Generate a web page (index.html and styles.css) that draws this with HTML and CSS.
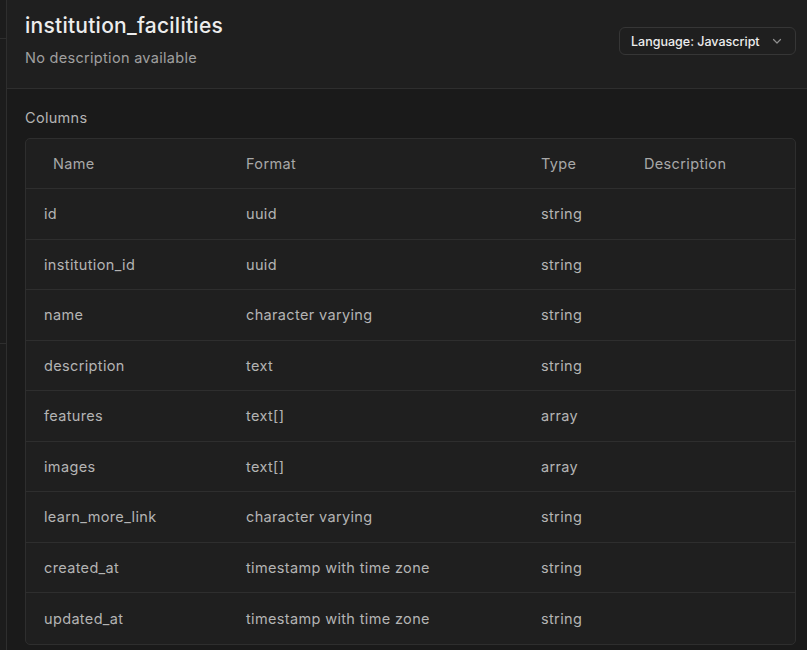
FILE: index.html
```html
<!DOCTYPE html>
<html>
<head>
<meta charset="utf-8">
<link rel="stylesheet" href="styles.css">
</head>
<body>
<div class="app">
  <aside class="strip">
    <div class="strip-top"></div>
    <div class="strip-mid"></div>
    <div class="strip-rest"></div>
  </aside>
  <main class="content">
    <header class="head">
      <div class="head-text">
        <h1 class="title">institution_facilities</h1>
        <p class="subtitle">No description available</p>
      </div>
      <button class="lang">
        <span>Language: Javascript</span>
        <svg class="chev" width="12" height="12" viewBox="0 0 12 12"><path d="M2.5 4.5 L6 8 L9.5 4.5" fill="none" stroke="#8f8f8f" stroke-width="1.2" stroke-linecap="round" stroke-linejoin="round"/></svg>
      </button>
    </header>
    <section class="body">
      <div class="label">Columns</div>
      <div class="table">
        <div class="row hdr">
          <div class="c name">Name</div><div class="c">Format</div><div class="c">Type</div><div class="c">Description</div>
        </div>
        <div class="row"><div class="c">id</div><div class="c">uuid</div><div class="c">string</div><div class="c"></div></div>
        <div class="row"><div class="c">institution_id</div><div class="c">uuid</div><div class="c">string</div><div class="c"></div></div>
        <div class="row"><div class="c">name</div><div class="c">character varying</div><div class="c">string</div><div class="c"></div></div>
        <div class="row"><div class="c">description</div><div class="c">text</div><div class="c">string</div><div class="c"></div></div>
        <div class="row"><div class="c">features</div><div class="c">text[]</div><div class="c">array</div><div class="c"></div></div>
        <div class="row"><div class="c">images</div><div class="c">text[]</div><div class="c">array</div><div class="c"></div></div>
        <div class="row"><div class="c">learn_more_link</div><div class="c">character varying</div><div class="c">string</div><div class="c"></div></div>
        <div class="row"><div class="c">created_at</div><div class="c">timestamp with time zone</div><div class="c">string</div><div class="c"></div></div>
        <div class="row last"><div class="c">updated_at</div><div class="c">timestamp with time zone</div><div class="c">string</div><div class="c"></div></div>
      </div>
    </section>
  </main>
</div>
</body>
</html>
```
FILE: styles.css
```css
* { box-sizing: border-box; }
html, body { margin: 0; padding: 0; height: 100%; }
body {
  background: #1a1a1a;
  font-family: Inter, "Noto Sans", sans-serif;
  color: #b4b4b4;
  overflow: hidden;
}
.app { display: flex; height: 650px; }
.strip {
  width: 7px;
  flex: none;
  background: #1c1c1c;
  border-right: 1px solid #2e2e2e;
  display: flex;
  flex-direction: column;
}
.strip-top { height: 39px; border-bottom: 1px solid #2e2e2e; }
.strip-mid { height: 305px; border-bottom: 1px solid #2e2e2e; }
.strip-rest { flex: 1; }
.content { flex: 1; display: flex; flex-direction: column; min-width: 0; }
.head {
  height: 89px;
  background: #1f1f1f;
  border-bottom: 1px solid #2e2e2e;
  display: flex;
  justify-content: space-between;
  align-items: flex-start;
  padding: 12px 11px 0 18px;
}
.title {
  margin: 0;
  font-size: 21px;
  font-weight: 500;
  color: #ededed;
  line-height: 27px;
  letter-spacing: 0.25px;
}
.subtitle {
  margin: 10px 0 0;
  font-size: 14.5px;
  color: #a0a0a0;
  line-height: 18px;
  letter-spacing: 0.3px;
}
.lang {
  margin-top: 15px;
  height: 28px;
  width: 177px;
  border: 1px solid #363636;
  border-radius: 6px;
  background: #1f1f1f;
  color: #ededed;
  font-family: inherit;
  font-size: 12.5px;
  font-weight: 500;
  display: flex;
  align-items: center;
  justify-content: space-between;
  padding: 0 12px 0 11px;
}
.chev { display: block; }
.body { padding: 19px 11px 0 18px; }
.label { font-size: 14.5px; color: #b4b4b4; line-height: 20px; margin-bottom: 10px; letter-spacing: 0.3px; }
.table {
  border: 1px solid #2e2e2e;
  border-radius: 5px;
  background: #1f1f1f;
  overflow: hidden;
}
.row {
  display: grid;
  grid-template-columns: 202px 295px 103px 1fr;
  height: 50.5px;
  align-items: center;
  border-bottom: 1px solid #2e2e2e;
  font-size: 14.5px;
  letter-spacing: 0.35px;
  color: #b4b4b4;
}
.row.last { border-bottom: none; }
.row.hdr { height: 50px; color: #a8a8a8; }
.c { padding-left: 18px; white-space: nowrap; }
.hdr .name { padding-left: 27px; }
```
